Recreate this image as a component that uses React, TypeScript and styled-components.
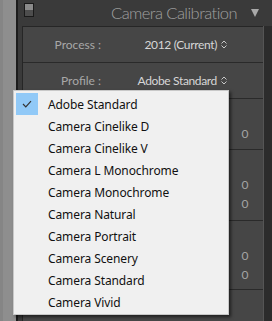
import React from "react";
import styled, { createGlobalStyle } from "styled-components";

const Global = createGlobalStyle`
  html, body { margin: 0; padding: 0; background: #3a3a3a; }
  body { width: 272px; height: 321px; overflow: hidden; }
  #root { width: 272px; height: 321px; }
`;

const Page = styled.div`
  position: relative;
  display: flex;
  width: 272px;
  height: 321px;
  overflow: hidden;
  font-family: Lato, "Noto Sans", sans-serif;
`;

const LeftStrip = styled.div`
  width: 16px;
  flex: none;
  background: linear-gradient(to right, #858585 0 3px, #8e8e8e 3px);
`;

const Divider = styled.div`
  width: 2px;
  flex: none;
  background: #1c1c1c;
`;

const Panel = styled.div`
  flex: 1;
  display: flex;
  flex-direction: column;
  background: #3a3a3a;
`;

const Header = styled.div`
  height: 26px;
  flex: none;
  display: flex;
  align-items: center;
  padding-left: 6px;
  padding-right: 13px;
  box-sizing: border-box;
`;

const Toggle = styled.div`
  width: 8px;
  height: 12px;
  border: 1px solid #1a1a1a;
  background: linear-gradient(to bottom, #8a8a8a 0 50%, #4d4d4d 50%);
  margin-top: -6px;
  flex: none;
`;

const Title = styled.div`
  flex: 1;
  text-align: right;
  color: #a0a0a0;
  font-size: 16.5px;
  letter-spacing: -0.55px;
  font-weight: 300;
  margin-right: 14px;
`;

const Triangle = styled.div`
  width: 0;
  height: 0;
  border-left: 4.5px solid transparent;
  border-right: 4.5px solid transparent;
  border-top: 8px solid #a9a9a9;
  flex: none;
`;

const Body = styled.div`
  flex: 1;
  display: flex;
  padding-left: 4px;
`;

const Inner = styled.div`
  flex: 1;
  display: flex;
  flex-direction: column;
  background: #464646;
  border-left: 1px solid #262626;
  border-top: 1px solid #262626;
`;

const RightStrip = styled.div`
  width: 9px;
  flex: none;
  background: #2c2c2c;
  border-left: 1px solid #555;
  box-sizing: border-box;
`;

const SelectRow = styled.div`
  height: 35px;
  flex: none;
  display: flex;
  align-items: center;
  border-bottom: 1px solid #2a2a2a;
  font-size: 12px;
`;

const Label = styled.div`
  width: 78px;
  text-align: right;
  color: #a8a8a8;
  flex: none;
`;

const Value = styled.div`
  flex: 1;
  display: flex;
  justify-content: flex-end;
  align-items: center;
  gap: 4px;
  padding-right: 36px;
  color: #d6d6d6;
  letter-spacing: -0.35px;
`;

const Group = styled.div<{ $h: number }>`
  height: ${(p) => p.$h}px;
  flex: none;
  box-sizing: border-box;
  padding-top: 25px;
  border-bottom: 1px solid #2a2a2a;
  display: flex;
  flex-direction: column;
`;

const SliderRow = styled.div`
  height: 19px;
  display: flex;
  align-items: center;
  font-size: 12px;
  color: #a8a8a8;
`;

const SliderLabel = styled.div`
  width: 78px;
  text-align: right;
  flex: none;
`;

const Track = styled.div`
  flex: 1;
  margin: 0 10px;
  height: 1px;
  border-top: 1px dotted #6a6a6a;
`;

const Num = styled.div`
  width: 30px;
  margin-right: 3px;
  text-align: center;
  flex: none;
  color: #a4a4a4;
`;

const Menu = styled.div`
  position: absolute;
  left: 13px;
  top: 90px;
  width: 216px;
  box-sizing: border-box;
  background: #f0f0f0;
  border: 1px solid #c8c8c8;
  padding: 2px 2px 1px 2px;
  box-shadow: 2px 2px 3px rgba(0, 0, 0, 0.55);
  font-family: "Noto Sans", "Open Sans", sans-serif;
  font-size: 12px;
  letter-spacing: -0.1px;
  color: #111;
`;

const Item = styled.div`
  height: 22px;
  display: flex;
  align-items: center;
`;

const Check = styled.div<{ $on: boolean }>`
  width: 22px;
  height: 22px;
  flex: none;
  display: flex;
  align-items: center;
  justify-content: center;
  background: ${(p) => (p.$on ? "#91c9f7" : "transparent")};
  margin-right: 10px;
`;

const Updown = () => (
  <svg width="6" height="9" viewBox="0 0 6 9">
    <path d="M0.5 3.5 L3 1 L5.5 3.5" fill="none" stroke="#c8c8c8" strokeWidth="1" />
    <path d="M0.5 5.5 L3 8 L5.5 5.5" fill="none" stroke="#c8c8c8" strokeWidth="1" />
  </svg>
);

const items = [
  "Adobe Standard",
  "Camera Cinelike D",
  "Camera Cinelike V",
  "Camera L Monochrome",
  "Camera Monochrome",
  "Camera Natural",
  "Camera Portrait",
  "Camera Scenery",
  "Camera Standard",
  "Camera Vivid",
];

const groups = [
  { key: "shadows", h: 51, rows: [""] },
  { key: "red", h: 71, rows: ["", ""] },
  { key: "green", h: 69, rows: ["", ""] },
  { key: "blue", h: 69, rows: ["Hue"] },
];

export default function App() {
  return (
    <Page>
      <Global />
      <LeftStrip />
      <Divider />
      <Panel>
        <Header>
          <Toggle />
          <Title>Camera Calibration</Title>
          <Triangle />
        </Header>
        <Body>
          <Inner>
            <SelectRow>
              <Label>Process :</Label>
              <Value>
                2012 (Current) <Updown />
              </Value>
            </SelectRow>
            <SelectRow>
              <Label>Profile :</Label>
              <Value>
                Adobe Standard <Updown />
              </Value>
            </SelectRow>
            {groups.map((g) => (
              <Group key={g.key} $h={g.h}>
                {g.rows.map((r, i) => (
                  <SliderRow key={i}>
                    <SliderLabel>{r}</SliderLabel>
                    <Track />
                    <Num>0</Num>
                  </SliderRow>
                ))}
              </Group>
            ))}
          </Inner>
          <RightStrip />
        </Body>
      </Panel>
      <Menu>
        {items.map((it, i) => (
          <Item key={it}>
            <Check $on={i === 0}>
              {i === 0 && (
                <svg width="10" height="8" viewBox="0 0 10 8">
                  <polyline points="1,4 3.8,6.8 9,1.2" fill="none" stroke="#333" strokeWidth="1.2" />
                </svg>
              )}
            </Check>
            {it}
          </Item>
        ))}
      </Menu>
    </Page>
  );
}
